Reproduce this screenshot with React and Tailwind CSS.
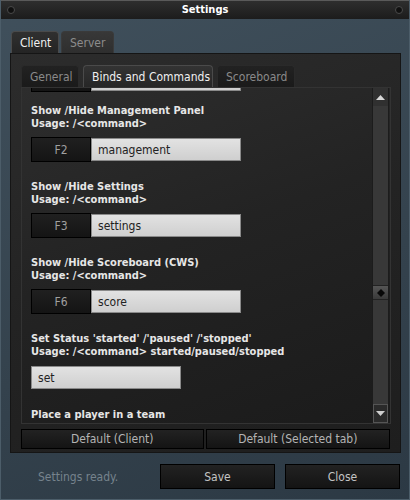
const font = "font-['DejaVu_Sans_Condensed','DejaVu_Sans',sans-serif]";

function KeyBind({ keyName, value }) {
  return (
    <div className="flex h-[25px]">
      <div className="flex w-[60px] items-center justify-center border border-black bg-[linear-gradient(180deg,#202020,#141414)] text-[12px] text-[#a0a0a0]">
        {keyName}
      </div>
      <div className="my-px flex w-[150px] items-center border border-[#8a8a8a] bg-[linear-gradient(180deg,#e2e2e2,#cfcfcf)] pl-[6px] pt-px text-[12px] text-[#222]">
        {value}
      </div>
    </div>
  );
}

function Command({ title, usage, keyName, value, gapTop = "mt-[18px]", noInput }) {
  return (
    <div className={gapTop}>
      <div className="whitespace-nowrap text-[11px] font-bold leading-[13px] text-[#e6e6e6]">{title}</div>
      <div className="whitespace-nowrap text-[11px] font-bold leading-[13px] text-[#e6e6e6]">{usage}</div>
      {!noInput && (
        <div className="mt-[7px]">
          {keyName ? (
            <KeyBind keyName={keyName} value={value} />
          ) : (
            <div className="flex h-[25px]">
              <div className="my-px flex w-[150px] items-center border border-[#8a8a8a] bg-[linear-gradient(180deg,#e2e2e2,#cfcfcf)] pl-[6px] pt-px text-[12px] text-[#222]">
                {value}
              </div>
            </div>
          )}
        </div>
      )}
    </div>
  );
}

function Tab({ label, active, className = "" }) {
  return (
    <div
      className={
        "flex h-[22px] items-center whitespace-nowrap rounded-t-[4px] border border-b-0 px-[8px] text-[12px] " +
        (active
          ? "border-[#4a4a4a] bg-[linear-gradient(180deg,#333,#262626)] text-[#f0f0f0]"
          : "border-[#2a2a2a] bg-[linear-gradient(180deg,#222,#1a1a1a)] text-[#8a8a8a]") +
        " " +
        className
      }
    >
      {label}
    </div>
  );
}

function DarkButton({ children, className = "" }) {
  return (
    <div
      className={
        "flex items-center justify-center whitespace-nowrap border border-black bg-[linear-gradient(180deg,#222,#141414)] text-[12px] text-[#b4b4b4] " +
        className
      }
    >
      {children}
    </div>
  );
}

export default function App() {
  return (
    <div className={`${font} h-[500px] w-[410px] overflow-hidden border-x border-b border-[#4c5d69] bg-[linear-gradient(160deg,#40505c,#34424d_60%,#2c3944)]`}>
      {/* title bar */}
      <div className="relative flex h-[19px] items-center justify-center border-t border-[#5a5a5a] bg-[linear-gradient(180deg,#2e2e2e,#1c1c1c)]">
        <span className="absolute left-[6px] top-[5px] h-[8px] w-[8px] rounded-full border border-[#4a4a4a] bg-[#111]" />
        <span className="text-[11px] font-bold text-white">Settings</span>
        <span className="absolute right-[6px] top-[5px] h-[8px] w-[8px] rounded-full border border-[#4a4a4a] bg-[#111]" />
      </div>

      <div className="px-[9px] pt-[12px]">
        {/* top tabs */}
        <div className="flex gap-[2px] pl-px">
          <Tab label="Client" active className="w-[48px] bg-[linear-gradient(180deg,#303030,#242424)]" />
          <Tab label="Server" className="w-[53px] border-[#3a3a3a] bg-[linear-gradient(180deg,#383838,#2e2e2e)] text-[#8c8c8c]" />
        </div>

        {/* outer panel */}
        <div className="h-[400px] w-[391px] border border-[#151515] bg-[linear-gradient(160deg,#2c2c2c,#232323_50%,#1e1e1e)] px-[10px] pt-[11px]">
          <div className="flex gap-[4px]">
            <Tab label="General" className="w-[58px]" />
            <Tab label="Binds and Commands" active className="w-[130px]" />
            <Tab label="Scoreboard" className="w-[78px]" />
          </div>

          {/* inner content */}
          <div className="flex h-[337px] w-[370px] overflow-hidden border border-[#333] bg-[linear-gradient(160deg,#2d2d2d,#232323_45%,#1b1b1b)]">
            <div className="flex-1 overflow-hidden pl-[9px]">
              <div className="-mt-[21px]">
                <KeyBind keyName="" value="" />
              </div>
              <Command gapTop="mt-[12px]" title="Show /Hide Management Panel" usage="Usage: /<command>" keyName="F2" value="management" />
              <Command title="Show /Hide Settings" usage="Usage: /<command>" keyName="F3" value="settings" />
              <Command title="Show /Hide Scoreboard (CWS)" usage="Usage: /<command>" keyName="F6" value="score" />
              <Command title="Set Status 'started' /'paused' /'stopped'" usage="Usage: /<command> started/paused/stopped" value="set" />
              <Command title="Place a player in a team" usage="Usage: /<command> <player> [team]" noInput />
            </div>

            {/* scrollbar */}
            <div className="mr-px flex w-[17px] flex-col border-x border-[#1c1c1c] bg-[#303030]">
              <div className="flex h-[18px] items-center justify-center">
                <svg width="9" height="5" viewBox="0 0 9 5"><path d="M4.5 0L9 5H0z" fill="#d8d8d8" /></svg>
              </div>
              <div className="h-[179px] bg-[#383838]" />
              <div className="flex h-[15px] items-center justify-center border-y border-[#222] bg-[linear-gradient(180deg,#555,#3a3a3a)]">
                <svg width="8" height="8" viewBox="0 0 8 8"><path d="M4 0L8 4L4 8L0 4z" fill="#080808" /></svg>
              </div>
              <div className="flex-1 bg-[#383838]" />
              <div className="flex h-[19px] items-center justify-center border border-[#555] bg-[#2a2a2a]">
                <svg width="9" height="5" viewBox="0 0 9 5"><path d="M0 0H9L4.5 5z" fill="#cfcfcf" /></svg>
              </div>
            </div>
          </div>

          <div className="mt-[5px] flex gap-[2px]">
            <DarkButton className="h-[20px] w-[183px]">Default (Client)</DarkButton>
            <DarkButton className="h-[20px] w-[185px]">Default (Selected tab)</DarkButton>
          </div>
        </div>

        {/* footer */}
        <div className="mt-[11px] flex h-[25px] items-center">
          <div className="w-[150px] pl-[28px] text-[12px] text-[#76838d]">Settings ready.</div>
          <DarkButton className="h-[25px] w-[115px] text-[#c4c4c4]">Save</DarkButton>
          <DarkButton className="ml-[10px] h-[25px] w-[115px] text-[#c4c4c4]">Close</DarkButton>
        </div>
      </div>
    </div>
  );
}
